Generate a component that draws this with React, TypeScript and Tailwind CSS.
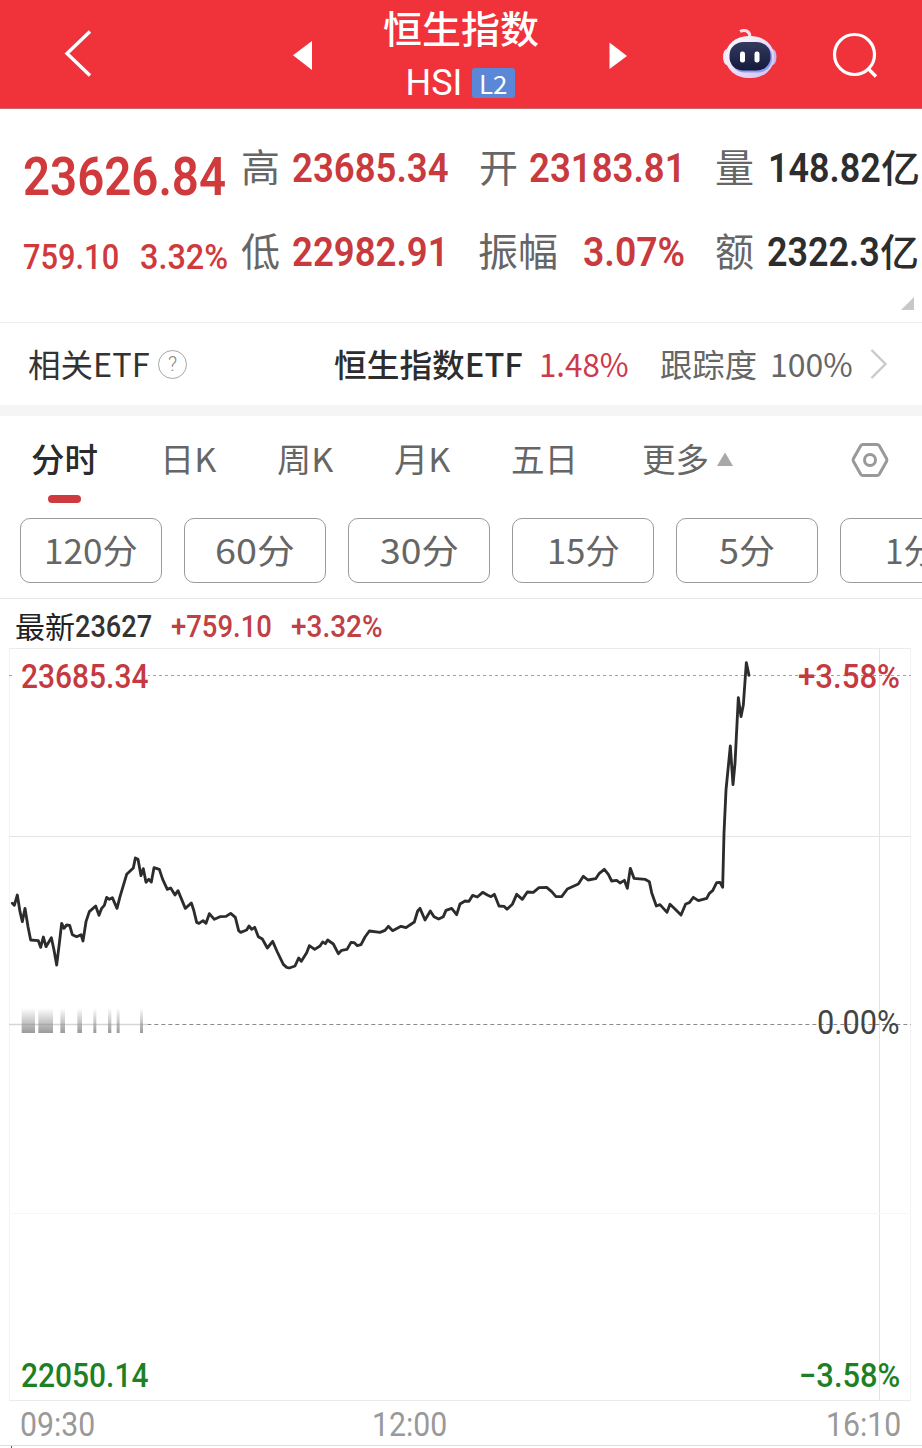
import { useLayoutEffect, useRef, useState } from "react";
import clsx from "clsx";

const NUM = "font-['Roboto','Noto_Sans_CJK_SC',sans-serif]";
const CJK = "font-['Noto_Sans_CJK_SC',sans-serif]";

/** Single-line text condensed or widened to fill the width of its box. */
function Fit({ text, className }: { text: string; className?: string }) {
  const box = useRef<HTMLSpanElement>(null);
  const inner = useRef<HTMLSpanElement>(null);
  const [scale, setScale] = useState(1);
  useLayoutEffect(() => {
    if (box.current && inner.current) {
      setScale(box.current.clientWidth / inner.current.offsetWidth);
    }
  }, [text]);
  return (
    <span ref={box} className={clsx("block shrink-0 whitespace-nowrap", className)}>
      <span ref={inner} className="inline-block origin-left" style={{ transform: `scaleX(${scale})` }}>
        {text}
      </span>
    </span>
  );
}

function Robot() {
  return (
    <svg viewBox="0 0 56 52" className="h-[52px] w-14 shrink-0">
      <defs>
        <linearGradient id="shell" x1="0" y1="0" x2="1" y2="1">
          <stop offset="0" stopColor="#ffffff" />
          <stop offset="0.55" stopColor="#e9dcf8" />
          <stop offset="1" stopColor="#c9c2f5" />
        </linearGradient>
        <linearGradient id="visor" x1="0" y1="0" x2="0" y2="1">
          <stop offset="0" stopColor="#323a5e" />
          <stop offset="1" stopColor="#141a3c" />
        </linearGradient>
      </defs>
      <path d="M18 3.500c4-2 9-1.500 10 4.500" fill="none" stroke="#fbdfe6" strokeWidth="3" />
      <ellipse cx="5" cy="29" rx="4" ry="8" fill="#f4e4f4" />
      <ellipse cx="50.500" cy="29" rx="4" ry="8" fill="#c7b8ee" />
      <rect x="3.500" y="8" width="48.500" height="42" rx="23" ry="20" fill="url(#shell)" />
      <rect x="8.500" y="15" width="41.500" height="29.500" rx="14" fill="#8f9bf0" />
      <rect x="7.500" y="14" width="41" height="28.500" rx="14" ry="13" fill="url(#visor)" />
      <rect x="18" y="23.500" width="5" height="11" rx="2.200" fill="#fff" />
      <rect x="32.500" y="23.500" width="5" height="11" rx="2.200" fill="#fff" />
    </svg>
  );
}

function Header() {
  return (
    <header className="flex h-[109px] items-start border-b border-[#c9666c] bg-[#f0323a] text-white">
      <svg viewBox="0 0 30 50" className="ml-[63px] mt-7 h-[50px] w-[30px] shrink-0">
        <path d="M27 3.500 4 25.500 27 47.500" fill="none" stroke="#fff" strokeWidth="3.400" />
      </svg>
      <svg viewBox="0 0 20 30" className="ml-[199px] mt-10 h-[30px] w-5 shrink-0">
        <path d="M1 15.300 20 1v29z" fill="#fff" />
      </svg>
      <div className="ml-[70px] flex w-[157px] flex-col items-center">
        <Fit text="恒生指数" className={clsx(CJK, "mt-[3px] w-[156px] text-[38px] font-medium leading-[48px]")} />
        <div className="mt-[9px] flex w-[110px] items-center">
          <Fit text="HSI" className={clsx(NUM, "w-[57px] text-[36px] leading-[46px]")} />
          <span className="ml-[9px] flex h-[30px] w-[43px] items-center justify-center rounded-[3px] bg-[#5a88d6]">
            <Fit text="L2" className={clsx(CJK, "-mt-px w-[28px] text-[25px] leading-[30px]")} />
          </span>
        </div>
      </div>
      <svg viewBox="0 0 18 28" className="ml-[70px] mt-[42px] h-7 w-[18px] shrink-0">
        <path d="M0.500 0.500 18 14 0.500 27z" fill="#fff" />
      </svg>
      <div className="ml-[95px] mt-7">
        <Robot />
      </div>
      <svg viewBox="0 0 46 46" className="ml-[54px] mt-8 h-[46px] w-[46px] shrink-0">
        <circle cx="22.500" cy="22.500" r="20" fill="none" stroke="#fff" strokeWidth="3.200" />
        <path d="M36 36.500 44 44.500" stroke="#fff" strokeWidth="3.400" />
      </svg>
    </header>
  );
}

const LABEL = clsx(CJK, "text-[39px] leading-[56px] text-[#666]");
const VALUE = clsx(NUM, "text-[41px] leading-[62px] font-semibold");
const UNIT = clsx(CJK, "w-[39px] text-[38px] font-medium leading-[57px] text-[#2d2d2d]");

function Quote() {
  return (
    <section className="h-[214px] border-b border-[#ececec] pt-[28px]">
      <div className="flex h-[150px]">
        <div className={clsx(NUM, "ml-[23px] w-[218px] shrink-0 font-semibold text-[#d03a3c]")}>
          <Fit text="23626.84" className="mt-2 w-[203px] text-[53px] leading-[64px]" />
          <div className="mt-[18px] flex text-[35px] font-medium leading-[62px]">
            <Fit text="759.10" className="w-[96px]" />
            <Fit text="3.32%" className="ml-[21px] w-[88px]" />
          </div>
        </div>
        <div className="flex flex-col gap-[22px]">
          <div className="flex">
            <Fit text="高" className={clsx(LABEL, "w-[39px]")} />
            <Fit text="23685.34" className={clsx(VALUE, "ml-[12px] w-[157px] text-[#c83a3e]")} />
            <Fit text="开" className={clsx(LABEL, "ml-[30px] w-[39px]")} />
            <Fit text="23183.81" className={clsx(VALUE, "ml-[11px] w-[157px] text-[#c83a3e]")} />
            <Fit text="量" className={clsx(LABEL, "ml-[29px] w-[39px]")} />
            <Fit text="148.82" className={clsx(VALUE, "ml-[14px] w-[113px] text-[#2d2d2d]")} />
            <Fit text="亿" className={UNIT} />
          </div>
          <div className="flex">
            <Fit text="低" className={clsx(LABEL, "w-[39px]")} />
            <Fit text="22982.91" className={clsx(VALUE, "ml-[12px] w-[157px] text-[#c83a3e]")} />
            <Fit text="振幅" className={clsx(LABEL, "ml-[29px] w-[80px]")} />
            <Fit text="3.07%" className={clsx(VALUE, "ml-[25px] w-[102px] text-[#c83a3e]")} />
            <Fit text="额" className={clsx(LABEL, "ml-[30px] w-[39px]")} />
            <Fit text="2322.3" className={clsx(VALUE, "ml-[13px] w-[113px] text-[#2d2d2d]")} />
            <Fit text="亿" className={UNIT} />
          </div>
        </div>
      </div>
      <svg viewBox="0 0 13 13" className="ml-[901px] mt-[10px] h-[13px] w-[13px]">
        <path d="M13 0v13H0z" fill="#c8c8c8" />
      </svg>
    </section>
  );
}

function EtfRow() {
  return (
    <section className="flex h-[82px] items-center text-[32px] leading-[48px]">
      <Fit text="相关ETF" className={clsx(CJK, "-mt-[3px] ml-7 w-[122px] text-[#333]")} />
      <span className="ml-[8px] flex h-[29px] w-[29px] items-center justify-center rounded-full border-[1.5px] border-[#a5a5a5] font-['Roboto',sans-serif] text-[20px] font-light leading-none text-[#888]">
        ?
      </span>
      <Fit text="恒生指数ETF" className={clsx(CJK, "-mt-[3px] ml-[147px] w-[189px] font-medium text-[#2d2d2d]")} />
      <Fit text="1.48%" className={clsx(CJK, "-mt-[3px] ml-[16px] w-[90px] text-[#cc3a4c]")} />
      <Fit text="跟踪度" className={clsx(CJK, "-mt-[3px] ml-[31px] w-[97px] text-[#666]")} />
      <Fit text="100%" className={clsx(CJK, "-mt-[3px] ml-[13px] w-[83px] text-[#666]")} />
      <svg viewBox="0 0 18 32" className="ml-[17px] h-8 w-[18px]">
        <path d="M1.500 2 15.500 16 1.500 30" fill="none" stroke="#c9c9c9" strokeWidth="2.400" />
      </svg>
    </section>
  );
}

function Tabs() {
  return (
    <nav className={clsx(CJK, "flex h-[102px] items-start border-t-[11px] border-[#f5f5f5] pt-[18px] text-[33px] leading-[48px] text-[#666]")}>
      <div className="ml-[31px] flex w-[67px] flex-col items-center text-[#2b2b2b]">
        <Fit text="分时" className="w-[67px] font-medium" />
        <span className="mt-[13px] h-2 w-[33px] rounded-full bg-[#cf3a3e]" />
      </div>
      <Fit text="日K" className="ml-[62px] w-[56px]" />
      <Fit text="周K" className="ml-[61px] w-[56px]" />
      <Fit text="月K" className="ml-[61px] w-[56px]" />
      <Fit text="五日" className="ml-[61px] w-[67px]" />
      <Fit text="更多" className="ml-[64px] w-[67px]" />
      <svg viewBox="0 0 16 14" className="ml-[8px] mt-[18px] h-3.5 w-4 shrink-0">
        <path d="M8 0.500 16 14H0z" fill="#a8a8a8" />
      </svg>
      <svg viewBox="0 0 38 36" className="ml-[118px] mt-[8px] h-9 w-[38px] shrink-0">
        <path d="M12 2.500h14q1.500 0 2.300 1.300L35.500 16.500q.8 1.500 0 3L28.300 32.200q-.8 1.300-2.300 1.300H12q-1.500 0-2.300-1.300L2.500 19.500q-.8-1.500 0-3L9.700 3.800Q10.500 2.500 12 2.500z" fill="none" stroke="#999" strokeWidth="3" />
        <circle cx="19" cy="18" r="5.500" fill="none" stroke="#999" strokeWidth="3" />
      </svg>
    </nav>
  );
}

const PERIODS = [
  { text: "120分", w: "w-[94px]" },
  { text: "60分", w: "w-[80px]" },
  { text: "30分", w: "w-[79px]" },
  { text: "15分", w: "w-[73px]" },
  { text: "5分", w: "w-[56px]" },
  { text: "1分", w: "w-[52px]" },
];

function Periods() {
  return (
    <div className="flex h-[81px] gap-[22px] overflow-hidden border-b border-[#e6e6e6] pl-5">
      {PERIODS.map((p) => (
        <button
          key={p.text}
          className={clsx(CJK, "flex h-[65px] w-[142px] shrink-0 items-center justify-center rounded-[10px] border border-[#9a9a9a] pb-0.5 text-left text-[34px] leading-[60px] text-[#666]")}
        >
          <Fit text={p.text} className={p.w} />
        </button>
      ))}
    </div>
  );
}

const PRICE_LINE =
  "37,190 43,196 52,165 60,215 67,245 75,205 84,260 92,300 115,302 122,322 130,291 138,320 154,293 162,330 170,375 178,310 185,250 192,265 200,255 209,256 217,284 230,290 243,284 249,303 258,245 268,215 287,198 297,226 305,205 313,196 320,172 328,178 337,173 351,205 360,170 380,103 400,84 406,54 414,58 423,107 430,86 438,127 446,118 454,126 462,83 478,88 488,118 502,148 512,144 525,165 534,152 556,205 574,189 581,210 590,247 597,250 609,242 618,250 628,221 643,238 660,230 678,229 692,220 706,232 716,272 722,277 740,270 747,258 755,268 764,262 775,290 787,297 802,324 818,304 832,336 850,373 860,382 868,384 885,378 896,354 904,364 920,338 928,317 944,328 960,318 968,306 976,311 983,300 1000,312 1015,341 1025,331 1041,328 1053,307 1063,308 1072,317 1083,314 1095,291 1108,273 1140,277 1155,271 1165,259 1178,272 1203,259 1218,263 1243,246 1253,213 1260,205 1275,240 1291,213 1302,230 1316,237 1330,230 1338,211 1355,205 1370,224 1380,192 1395,183 1407,184 1418,166 1432,171 1448,157 1462,165 1473,170 1483,163 1497,198 1512,199 1521,208 1537,193 1550,163 1567,178 1582,156 1600,157 1617,143 1640,142 1655,155 1668,170 1685,170 1702,147 1735,132 1750,109 1764,120 1787,116 1797,101 1813,88 1825,103 1835,123 1850,121 1860,129 1873,121 1882,145 1891,85 1902,115 1935,118 1948,125 1955,158 1969,198 1980,194 2001,217 2010,193 2025,207 2043,225 2057,192 2068,188 2080,172 2095,182 2120,175 2128,160 2138,152 2150,128 2160,127 2168,142 2172,-20 2178,-150 2191,-282 2199,-166 2205,-230 2215,-427 2223,-370 2230,-405 2239,-532 2247,-494";

const VOLUME = [
  [65, 40],
  [115, 44],
  [181, 14],
  [232, 14],
  [280, 9],
  [324, 10],
  [350, 9],
  [420, 9],
];

function Chart() {
  const label = clsx(NUM, "absolute text-[33px] leading-10 font-medium");
  return (
    <div className="relative ml-[9px] h-[753px] w-[902px]">
      <svg viewBox="27 -576 2706 2259" className="block h-[753px] w-[902px]">
        <defs>
          <linearGradient id="fade" x1="0" y1="0" x2="0" y2="1">
            <stop offset="0" stopColor="#888" stopOpacity="0" />
            <stop offset="1" stopColor="#888" stopOpacity="0.850" />
          </linearGradient>
        </defs>
        <g fill="none" strokeWidth="3">
          <path d="M28.500 -576V1680M2731.500 -576V1680" stroke="#f3f3f3" />
          <path d="M27 -574.500H2733M27 1681.500H2733" stroke="#ebebeb" />
          <path d="M27 -10.500H2733M2638.500 -576V1680" stroke="#e4e4e4" />
          <path d="M27 1120.500H2733" stroke="#f6f6f6" />
          <path d="M27 -493.500H2733" stroke="#b89a9a" strokeDasharray="9 9" />
          <path d="M442 553.500H2733" stroke="#8a8a8a" strokeDasharray="12 9" />
          <path d="M27 553.500H442" stroke="#d5d5d5" strokeWidth="4" />
        </g>
        {VOLUME.map(([x, w]) => (
          <rect key={x} x={x} y={504} width={w} height={75} fill="url(#fade)" />
        ))}
        <polyline points={PRICE_LINE} fill="none" stroke="#2c2c2c" strokeWidth="8.500" strokeLinejoin="round" strokeLinecap="round" />
      </svg>
      <span className={clsx(label, "left-[3px] top-[9px] bg-white pl-[9px] text-[#c43a40]")}>
        <Fit text="23685.34" className="w-[127px]" />
      </span>
      <span className={clsx(label, "right-[11px] top-[9px] text-[#c43a40]")}>
        <Fit text="+3.58%" className="w-[102px]" />
      </span>
      <span className={clsx(label, "right-[11px] top-[355px] font-normal text-[#444]")}>
        <Fit text="0.00%" className="w-[83px]" />
      </span>
      <span className={clsx(label, "bottom-[5px] left-[12px] text-[#1e8024]")}>
        <Fit text="22050.14" className="w-[127px]" />
      </span>
      <span className={clsx(label, "bottom-[5px] right-[11px] text-[#1e8024]")}>
        <Fit text="−3.58%" className="w-[101px]" />
      </span>
    </div>
  );
}

export default function App() {
  return (
    <main className="h-[1448px] w-[922px] overflow-hidden bg-white">
      <Header />
      <Quote />
      <EtfRow />
      <Tabs />
      <div className="mt-[11px]">
        <Periods />
      </div>
      <div className={clsx(NUM, "flex h-[49px] items-start pt-[3px] text-[31px] font-medium leading-[50px]")}>
        <Fit text="最新" className={clsx(CJK, "ml-[15px] w-[60px] text-[30px] font-normal leading-[46px] text-[#222]")} />
        <Fit text="23627" className="w-[77px] text-[#333]" />
        <Fit text="+759.10" className="ml-[19px] w-[101px] text-[#c04045]" />
        <Fit text="+3.32%" className="ml-[19px] w-[92px] text-[#c04045]" />
      </div>
      <Chart />
      <div className={clsx(NUM, "flex h-[45px] w-[922px] border-b border-[#ddd] text-[33px] leading-[48px] text-[#999]")}>
        <Fit text="09:30" className="ml-[20px] w-[75px]" />
        <Fit text="12:00" className="ml-[277px] w-[75px]" />
        <Fit text="16:10" className="ml-[379px] w-[75px]" />
      </div>
      <div className="ml-[11px] h-1 w-px bg-[#555]" />
    </main>
  );
}
